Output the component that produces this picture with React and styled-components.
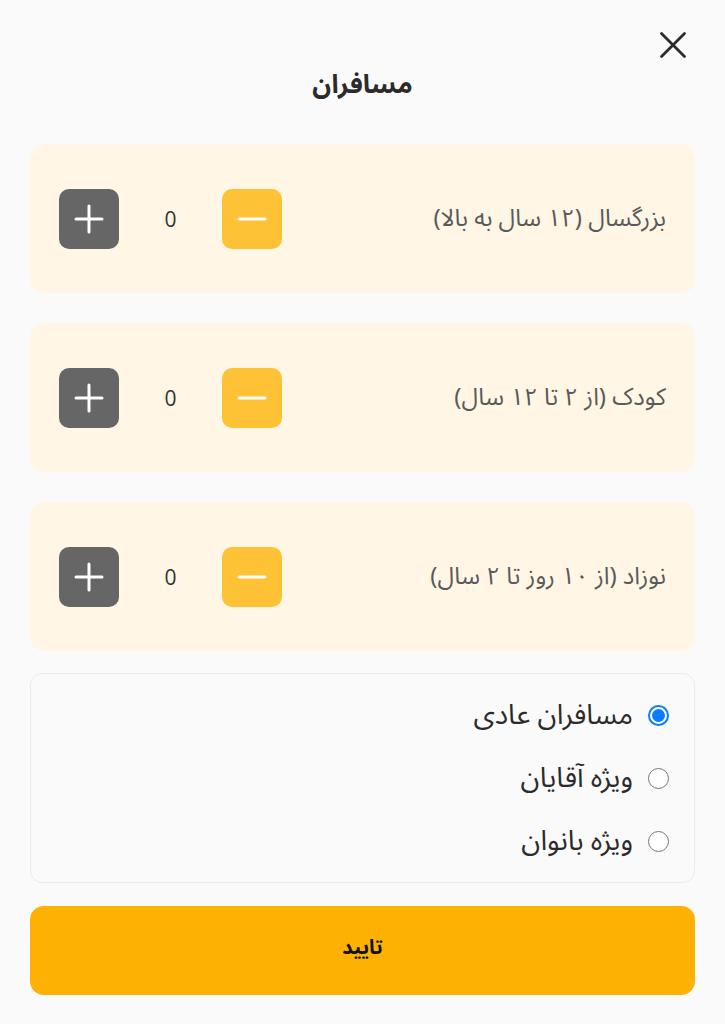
import React, { useState } from "react";
import styled, { createGlobalStyle } from "styled-components";

const Global = createGlobalStyle`
  html, body { margin: 0; padding: 0; background: #fafafa; }
  body { font-family: "Noto Sans Arabic", "Vazirmatn", "DejaVu Sans", sans-serif; }
`;

const Sheet = styled.div`
  direction: rtl;
  width: 725px;
  min-height: 1024px;
  box-sizing: border-box;
  background: #fafafa;
  padding: 28px 30px 30px;
  display: flex;
  flex-direction: column;
`;

const Header = styled.div`
  position: relative;
  display: flex;
  justify-content: center;
  padding-top: 41px;
  height: 116px;
  box-sizing: border-box;
`;

const Title = styled.h1`
  margin: 0;
  font-size: 26px;
  line-height: 1.2;
  font-weight: 700;
  color: #2b2b2b;
`;

const Close = styled.button`
  position: absolute;
  top: 0;
  right: 5px;
  width: 34px;
  height: 34px;
  border: 0;
  padding: 0;
  background: transparent;
  display: flex;
  align-items: center;
  justify-content: center;
  cursor: pointer;
`;

const CounterList = styled.div`
  display: flex;
  flex-direction: column;
  gap: 30px;
`;

const CounterCard = styled.div`
  height: 149px;
  box-sizing: border-box;
  background: #fff6e6;
  border-radius: 14px;
  padding: 0 29px;
  display: flex;
  align-items: center;
  justify-content: space-between;
`;

const Label = styled.span`
  font-size: 24px;
  color: #5a5a5a;
`;

const Stepper = styled.div`
  display: flex;
  align-items: center;
  direction: rtl;
`;

const StepButton = styled.button`
  width: 60px;
  height: 60px;
  border: 0;
  padding: 0;
  border-radius: 10px;
  background: ${(p) => (p.$plus ? "#666666" : "#fec236")};
  display: flex;
  align-items: center;
  justify-content: center;
  cursor: pointer;
`;

const Count = styled.span`
  width: 103px;
  text-align: center;
  font-family: "Open Sans", sans-serif;
  font-size: 21px;
  color: #333;
`;

const RadioBox = styled.div`
  margin-top: 22px;
  height: 210px;
  box-sizing: border-box;
  border: 1px solid #ececec;
  border-radius: 12px;
  padding: 10px 25px 0;
  display: flex;
  flex-direction: column;
`;

const RadioRow = styled.label`
  height: 63px;
  display: flex;
  align-items: center;
  gap: 15px;
  font-size: 28px;
  color: #2b2b2b;
  cursor: pointer;
`;

const RadioDot = styled.span`
  flex: none;
  width: 21px;
  height: 21px;
  box-sizing: border-box;
  border-radius: 50%;
  border: ${(p) => (p.$on ? "2px solid #0a7cff" : "1.5px solid #767676")};
  display: flex;
  align-items: center;
  justify-content: center;
  background: #fff;
  &::after {
    content: "";
    width: 13px;
    height: 13px;
    border-radius: 50%;
    background: ${(p) => (p.$on ? "#0a7cff" : "transparent")};
  }
`;

const Confirm = styled.button`
  margin-top: 23px;
  height: 89px;
  border: 0;
  border-radius: 14px;
  background: #fdb203;
  font-family: inherit;
  font-size: 20px;
  line-height: 1;
  padding-bottom: 6px;
  font-weight: 700;
  color: #111;
  cursor: pointer;
`;

const Plus = () => (
  <svg width="32" height="32" viewBox="0 0 32 32">
    <path d="M16 3v26M3 16h26" stroke="#fff" strokeWidth="3" strokeLinecap="round" />
  </svg>
);

const Minus = () => (
  <svg width="32" height="32" viewBox="0 0 32 32">
    <path d="M3 16h26" stroke="#fff" strokeWidth="3" strokeLinecap="round" />
  </svg>
);

const groups = [
  { key: "adult", label: "بزرگسال (۱۲ سال به بالا)" },
  { key: "child", label: "کودک (از ۲ تا ۱۲ سال)" },
  { key: "infant", label: "نوزاد (از ۱۰ روز تا ۲ سال)" },
];

const kinds = ["مسافران عادی", "ویژه آقایان", "ویژه بانوان"];

export default function App() {
  const [counts, setCounts] = useState({ adult: 0, child: 0, infant: 0 });
  const [kind, setKind] = useState(0);

  const step = (k, d) =>
    setCounts((c) => ({ ...c, [k]: Math.max(0, c[k] + d) }));

  return (
    <>
      <Global />
      <Sheet>
        <Header>
          <Title>مسافران</Title>
          <Close aria-label="بستن">
            <svg width="28" height="28" viewBox="0 0 28 28">
              <path d="M2.5 2.5l23 23M25.5 2.5l-23 23" stroke="#2b2b2b" strokeWidth="2.8" strokeLinecap="round" />
            </svg>
          </Close>
        </Header>
        <CounterList>
          {groups.map((g) => (
            <CounterCard key={g.key}>
              <Label>{g.label}</Label>
              <Stepper>
                <StepButton onClick={() => step(g.key, -1)}>
                  <Minus />
                </StepButton>
                <Count>{counts[g.key]}</Count>
                <StepButton $plus onClick={() => step(g.key, 1)}>
                  <Plus />
                </StepButton>
              </Stepper>
            </CounterCard>
          ))}
        </CounterList>
        <RadioBox>
          {kinds.map((k, i) => (
            <RadioRow key={k} onClick={() => setKind(i)}>
              <RadioDot $on={kind === i} />
              {k}
            </RadioRow>
          ))}
        </RadioBox>
        <Confirm>تایید</Confirm>
      </Sheet>
    </>
  );
}
